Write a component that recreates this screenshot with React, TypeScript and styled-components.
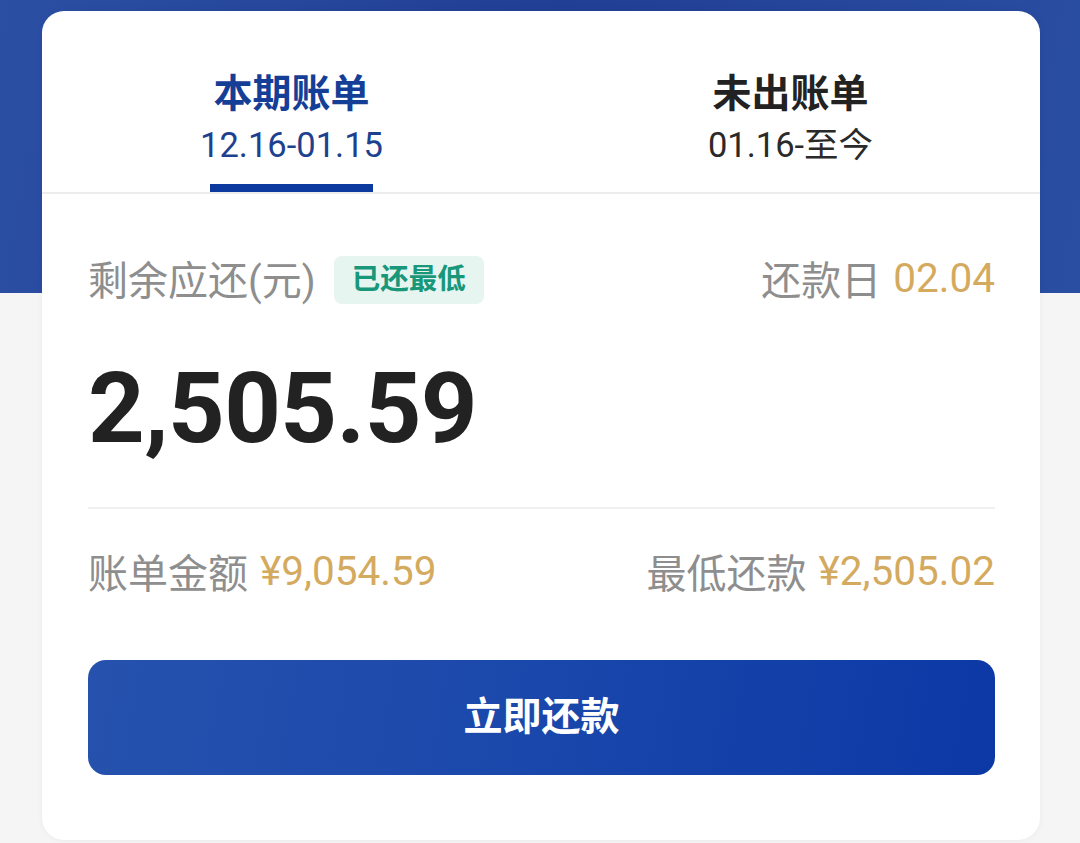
import React, {useState} from 'react';
import styled, {createGlobalStyle} from "styled-components";

const GlobalStyle = createGlobalStyle`
  html, body {
    margin: 0;
    padding: 0;
    background: #f5f5f5;
  }

  body {
    font-family: Roboto, "Noto Sans CJK SC", sans-serif;
    -webkit-font-smoothing: antialiased;
  }
`;

type TabProps = {
    title: string
    range: string
    active: boolean
    onClick: () => void
}

function Tab({title, range, active, onClick}: TabProps) {
    return (
        <TabItem onClick={onClick}>
            <TabTitle $active={active}>{title}</TabTitle>
            <TabRange $active={active}>{range}</TabRange>
            <Indicator $active={active}/>
        </TabItem>
    );
}

function App() {
    const [tab, setTab] = useState(0);

    return (
        <Page>
            <GlobalStyle/>
            <Card>
                <Tabs>
                    <Tab title="本期账单" range="12.16-01.15" active={tab === 0} onClick={() => setTab(0)}/>
                    <Tab title="未出账单" range="01.16-至今" active={tab === 1} onClick={() => setTab(1)}/>
                </Tabs>
                <Body>
                    <Row>
                        <Left>
                            <Label>剩余应还(元)</Label>
                            <Badge>已还最低</Badge>
                        </Left>
                        <Left>
                            <Label>还款日</Label>
                            <Gold>02.04</Gold>
                        </Left>
                    </Row>
                    <Amount>2,505.59</Amount>
                    <Divider/>
                    <Row>
                        <Left>
                            <Label>账单金额</Label>
                            <Gold>¥9,054.59</Gold>
                        </Left>
                        <Left>
                            <Label>最低还款</Label>
                            <Gold>¥2,505.02</Gold>
                        </Left>
                    </Row>
                    <PayButton>立即还款</PayButton>
                </Body>
            </Card>
        </Page>
    );
}

const Page = styled.div`
  min-height: 843px;
  padding: 11px 40px 0 42px;
  box-sizing: border-box;
  background: linear-gradient(100deg, #2b4fa3 0%, #213f94 50%, #2a4ea2 100%) no-repeat top left / 100% 293px,
  #f5f5f5;
`;

const Card = styled.div`
  width: 998px;
  height: 829px;
  background: #fff;
  border-radius: 22px;
  box-shadow: 0 0 6px rgba(0, 0, 0, 0.05);
  overflow: hidden;
`;

const Tabs = styled.div`
  display: grid;
  grid-template-columns: 1fr 1fr;
  border-bottom: 2px solid #ececec;
`;

const TabItem = styled.div`
  display: flex;
  flex-direction: column;
  align-items: center;
  padding-top: 60px;
  cursor: pointer;
`;

const TabTitle = styled.div<{ $active: boolean }>`
  font-size: 39px;
  line-height: 46px;
  font-weight: 700;
  color: ${p => p.$active ? '#153f97' : '#222'};
`;

const TabRange = styled.div<{ $active: boolean }>`
  margin-top: 7px;
  font-size: 34.5px;
  line-height: 42px;
  color: ${p => p.$active ? '#1d418f' : '#2a2a2a'};
`;

const Indicator = styled.div<{ $active: boolean }>`
  margin-top: 18px;
  width: 163px;
  height: 8px;
  background: ${p => p.$active ? '#0c3a9f' : 'transparent'};
`;

const Body = styled.div`
  display: flex;
  flex-direction: column;
  padding: 60px 45px 0 46px;
`;

const Row = styled.div`
  display: flex;
  justify-content: space-between;
  align-items: center;
  height: 48px;
`;

const Left = styled.div`
  display: flex;
  align-items: center;
`;

const Label = styled.span`
  font-size: 40px;
  color: #8e8e8e;
`;

const Gold = styled.span`
  margin-left: 12px;
  font-size: 40.5px;
  color: #d4aa5f;
`;

const Badge = styled.span`
  margin-left: 18px;
  margin-top: 4px;
  padding: 0 18px;
  height: 48px;
  line-height: 48px;
  border-radius: 8px;
  background: #e6f5ef;
  color: #18977a;
  font-size: 28.5px;
  font-weight: 700;
`;

const Amount = styled.div`
  margin-top: 46px;
  font-size: 99px;
  line-height: 120px;
  font-weight: 700;
  color: #222;
  letter-spacing: -0.6px;
`;

const Divider = styled.div`
  margin: 39px 0 38px;
  height: 2px;
  background: #efefef;
`;

const PayButton = styled.button`
  margin-top: 65px;
  height: 115px;
  padding: 0 0 10px;
  border: none;
  border-radius: 18px;
  background: linear-gradient(100deg, #2652ae 0%, #1a47ab 50%, #0b38a5 100%);
  color: #fff;
  font-family: Roboto, "Noto Sans CJK SC", sans-serif;
  font-size: 39px;
  font-weight: 700;
  cursor: pointer;
`;

export default App;
